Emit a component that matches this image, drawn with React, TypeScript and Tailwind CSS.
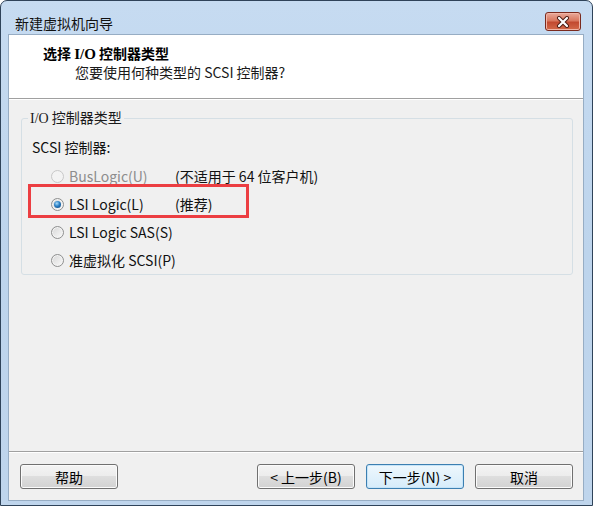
import type { ReactNode } from 'react'

const font = 'font-["Noto_Sans_CJK_SC","Noto_Sans",sans-serif]'

function Radio({ checked, disabled }: { checked?: boolean; disabled?: boolean }) {
  return (
    <span
      className={`flex h-[13px] w-[13px] shrink-0 items-center justify-center rounded-full border ${
        disabled
          ? 'border-[#c8c8c8] bg-[#f3f3f3]'
          : 'border-[#8e8f8f] bg-gradient-to-br from-[#d6d6d6] to-[#fbfbfb] shadow-[inset_0_0_0_1px_#f4f4f4]'
      }`}
    >
      {checked ? (
        <span className="h-[7px] w-[7px] rounded-full bg-[radial-gradient(circle_at_40%_35%,#a9dcfa_0%,#2a7fc4_45%,#0e3f74_100%)]" />
      ) : null}
    </span>
  )
}

function WinButton({ children, focused }: { children: ReactNode; focused?: boolean }) {
  return (
    <button
      className={`flex h-[25px] w-[98px] items-center justify-center rounded-[3px] border text-[14px] leading-none text-black ${
        focused
          ? 'border-[#3c7fb1] bg-gradient-to-b from-[#eef7fd] to-[#d6ecfa] shadow-[inset_0_0_0_1px_#c6e4f8]'
          : 'border-[#707070] bg-[linear-gradient(#f4f4f4_0%,#ececec_50%,#dedede_50%,#d2d2d2_100%)] shadow-[inset_0_0_0_1px_#fbfbfb]'
      }`}
    >
      {children}
    </button>
  )
}

type Option = { label: string; note?: string; checked?: boolean; disabled?: boolean; marked?: boolean }

const options: Option[] = [
  { label: 'BusLogic(U)', note: '(不适用于 64 位客户机)', disabled: true },
  { label: 'LSI Logic(L)', note: '(推荐)', checked: true, marked: true },
  { label: 'LSI Logic SAS(S)' },
  { label: '准虚拟化 SCSI(P)' },
]

export default function App() {
  return (
    <div className={`h-[506px] w-[593px] bg-white ${font}`}>
      <div className="flex h-full flex-col rounded-t-[7px] border border-[#2f4359] bg-gradient-to-b from-[#c6dbf1] via-[#bdd4ec] to-[#bfd5ec]">
        {/* title bar */}
        <div className="relative h-[33px] pl-[14px] pt-[12px] text-[14px] leading-[20px] text-[#111]">
          新建虚拟机向导
          <div className="absolute right-[11px] top-[11px] flex h-[19px] w-[36px] items-center justify-center rounded-[3px] border border-[#7a2a1e] bg-[linear-gradient(#e9a99a_0%,#d9785f_45%,#c24a30_55%,#d46a4a_100%)] shadow-[inset_0_0_0_1px_#f1b5a6]">
            <svg width="14" height="12" viewBox="0 0 14 12">
              <path d="M3 2 L11 10 M11 2 L3 10" stroke="#4a1a12" strokeWidth="4" strokeLinecap="round" />
              <path d="M3 2 L11 10 M11 2 L3 10" stroke="#ffffff" strokeWidth="2.2" strokeLinecap="round" />
            </svg>
          </div>
        </div>

        {/* client area */}
        <div className="mb-[4px] ml-[7px] mr-[8px] flex flex-1 flex-col border border-[#97adc4] bg-[#f0f0f0]">
          <div className="h-[64px] border-b border-[#a0a0a0] bg-white pt-[8px]">
            <div className="pl-[34px] text-[14px] font-bold leading-[20px] text-black">
              选择 <span className='font-["Liberation_Serif",serif] text-[15px]'>I/O</span> 控制器类型
            </div>
            <div className="-mt-px pl-[66px] text-[14px] leading-[19px] text-[#1a1a1a]">您要使用何种类型的 SCSI 控制器?</div>
          </div>
          <div className="h-px bg-white" />

          <fieldset className="ml-[12px] mr-[10px] mt-[7px] rounded-[3px] border border-[#d5dfe5] pb-0">
            <legend className="ml-[6px] px-[2px] text-[14px] leading-[20px] text-[#1a1a1a]">
              <span className='font-["Liberation_Serif",serif]'>I/O</span> 控制器类型
            </legend>
            <div className="mt-[8px] pl-[10px] text-[14px] leading-[20px] text-[#111]">SCSI 控制器:</div>
            <div className="mt-[5px] flex flex-col">
              {options.map((o) => (
                <div key={o.label} className="relative flex h-[28px] items-center whitespace-nowrap pl-[29px] text-[14px] leading-none">
                  <Radio checked={o.checked} disabled={o.disabled} />
                  <span className={`ml-[5px] w-[106px] shrink-0 ${o.disabled ? 'text-[#8d8d8d]' : 'text-[#111]'}`}>{o.label}</span>
                  {o.note ? <span className="text-[#111]">{o.note}</span> : null}
                  {o.marked ? (
                    <span className="pointer-events-none absolute -top-[6px] left-[6px] h-[34px] w-[221px] border-[3px] border-[#ec3e42]" />
                  ) : null}
                </div>
              ))}
            </div>
          </fieldset>

          <div className="flex-1" />

          <div className="h-px bg-[#a0a0a0]" />
          <div className="h-px bg-white" />
          <div className="flex items-center pb-[11px] pl-[11px] pr-[10px] pt-[11px]">
            <WinButton>帮助</WinButton>
            <div className="flex-1" />
            <div className="flex gap-[11px]">
              <WinButton>&lt; 上一步(B)</WinButton>
              <WinButton focused>下一步(N) &gt;</WinButton>
              <WinButton>取消</WinButton>
            </div>
          </div>
        </div>
      </div>
    </div>
  )
}
